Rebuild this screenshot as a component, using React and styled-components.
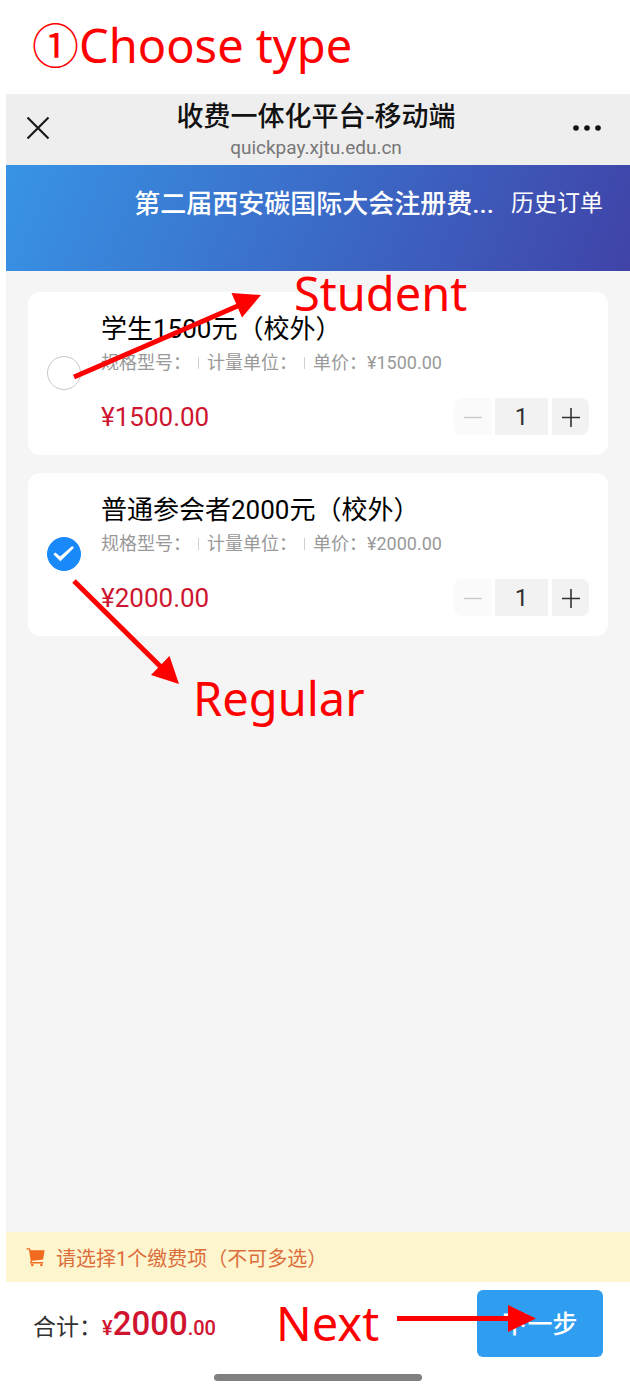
import React, { useState } from 'react';
import styled, { createGlobalStyle, css } from 'styled-components';


// styles
const GlobalStyle = createGlobalStyle`
  * {
    box-sizing: border-box;
  }

  body {
    margin: 0;
    background: #fff;
    color: #111;
    font-family: Roboto, 'Noto Sans CJK SC', sans-serif;
  }

  button,
  input {
    margin: 0;
    padding: 0;
    border: 0;
    font: inherit;
    color: inherit;
  }
`;

const Page = styled.div`
  display: flex;
  flex-direction: column;
  min-height: 100vh;
`;

const guideText = css`
  color: #f00;
  font-family: 'Noto Sans', 'Noto Sans CJK SC', sans-serif;
  font-size: 47px;
  font-weight: 400;
  line-height: 60px;
  white-space: nowrap;
`;

const StepHeading = styled.h1`
  ${guideText}
  height: 94px;
  margin: 0;
  padding: 15px 32px 0;
`;

const Phone = styled.div`
  position: relative;
  flex: 1;
  display: flex;
  flex-direction: column;
  margin-left: 6px;
  background: #f5f5f5;
`;

const NavBar = styled.header`
  display: grid;
  grid-template-columns: 1fr auto 1fr;
  align-items: center;
  height: 71px;
  padding: 0 24px 3px 20px;
  background: #eee;
`;

const NavButton = styled.button`
  display: flex;
  justify-self: ${props => props.$align};
  background: none;
`;

const NavTitles = styled.div`
  display: flex;
  flex-direction: column;
  align-items: center;
`;

const NavTitle = styled.div`
  font-size: 27px;
  font-weight: 500;
  line-height: 39px;
`;

const NavHost = styled.div`
  color: #777;
  font-size: 19px;
  line-height: 22px;
`;

const Banner = styled.div`
  display: flex;
  justify-content: flex-end;
  gap: 17px;
  height: 106px;
  padding: 19px 27px 0;
  background: linear-gradient(112deg, #3894e6 0%, #3b6dc9 48%, #4043a8 100%);
  color: #fff;
  line-height: 40px;
`;

const BannerTitle = styled.div`
  font-size: 26px;
  font-weight: 500;
`;

const BannerLink = styled.a`
  color: inherit;
  font-size: 23px;
  text-decoration: none;
`;

const FeeList = styled.main`
  flex: 1;
  display: flex;
  flex-direction: column;
  gap: 18px;
  padding: 21px 22px;
`;

const FeeCard = styled.section`
  display: flex;
  align-items: center;
  gap: 20px;
  padding: 19px 19px 20px;
  border-radius: 12px;
  background: #fff;
`;

const Choice = styled.span`
  display: grid;
  flex: none;

  > * {
    grid-area: 1 / 1;
  }

  svg {
    pointer-events: none;
  }
`;

const Radio = styled.input`
  appearance: none;
  width: 34px;
  height: 34px;
  border: 1px solid #c8c8c8;
  border-radius: 50%;
  background: #fff;

  &:checked {
    border-color: #1989fa;
    background: #1989fa;
  }
`;

const FeeBody = styled.div`
  flex: 1;
`;

const FeeName = styled.label`
  display: block;
  color: #000;
  font-size: 26px;
  line-height: 36px;
`;

const FeeSpecs = styled.div`
  display: flex;
  align-items: center;
  color: #999;
  font-size: 18px;
  line-height: 32px;
`;

const SpecDivider = styled.span`
  width: 1px;
  height: 12px;
  margin: 0 8px 0 7px;
  background: #d0d0d0;
`;

const FeeBottom = styled.div`
  display: flex;
  align-items: center;
  justify-content: space-between;
  margin-top: 19px;
`;

const Price = styled.div`
  color: #ce1630;
  font-size: 26px;
`;

const StepperBox = styled.div`
  display: flex;
  gap: 4px;
  height: 37px;
`;

const StepperButton = styled.button`
  display: flex;
  align-items: center;
  justify-content: center;
  width: 37px;
  border-radius: ${props => (props.$side === 'left' ? '8px 0 0 8px' : '0 8px 8px 0')};
  background: #f2f2f3;
  color: #323233;

  &:disabled {
    background: #fafafa;
    color: #c8c9cc;
  }
`;

const StepperInput = styled.input`
  width: 53px;
  background: #f2f2f3;
  color: #323233;
  font-size: 24px;
  text-align: center;
`;

const Notice = styled.div`
  display: flex;
  align-items: center;
  gap: 10px;
  height: 50px;
  padding: 0 20px;
  background: #fdf5ce;
  color: #dc6e3c;
  font-size: 20px;
`;

const Footer = styled.footer`
  position: relative;
  display: flex;
  flex-direction: column;
  gap: 17px;
  padding: 8px 27px 12px;
  background: #fff;
`;

const FooterRow = styled.div`
  display: flex;
  align-items: center;
  justify-content: space-between;
`;

const Total = styled.div`
  display: flex;
  align-items: baseline;
  color: #323233;
  font-size: 23px;
`;

const TotalAmount = styled.strong`
  color: #d01430;
  font-size: 20px;
  font-weight: 500;
`;

const TotalWhole = styled.span`
  font-size: 33px;
`;

const NextButton = styled.button`
  width: 126px;
  height: 67px;
  padding-bottom: 4px;
  border-radius: 6px;
  background: #2f9ef0;
  color: #fff;
  font-size: 25px;
  font-weight: 500;
`;

const HomeIndicator = styled.div`
  align-self: center;
  width: 208px;
  height: 7px;
  border-radius: 4px;
  background: #808080;
`;

// guide labels and arrows lie over the phone screen
const GuideLabel = styled.div`
  ${guideText}
  position: absolute;
  left: ${props => props.$left}px;
  top: ${props => props.$top}px;
  pointer-events: none;
`;

const GuideArrow = styled.svg`
  position: absolute;
  left: ${props => props.$left}px;
  top: ${props => props.$top}px;
  fill: #f00;
  stroke: #f00;
  pointer-events: none;

  line {
    stroke-width: 5;
  }

  polygon {
    stroke: none;
  }
`;

// icons
const CloseIcon = () => (
  <svg width="24" height="24" viewBox="0 0 24 24" stroke="#1a1a1a" strokeWidth="2.2">
    <path d="M1.5 1.5l21 21M22.5 1.5l-21 21" />
  </svg>
);

const MoreIcon = () => (
  <svg width="34" height="8" viewBox="0 0 34 8" fill="#111">
    <circle cx="4" cy="4" r="2.8" />
    <circle cx="15" cy="4" r="2.8" />
    <circle cx="26" cy="4" r="2.8" />
  </svg>
);

const CheckIcon = () => (
  <svg width="34" height="34" viewBox="0 0 34 34" fill="#fff">
    <path d="M6.3 17.2l2-1.8 4.9 4L25.2 9l1.8 1.7L13.4 24.3z" />
  </svg>
);

const CartIcon = () => (
  <svg width="20" height="20" viewBox="0 0 20 20" fill="#f26a1e">
    <path d="M.5 1.2h3.3l.8 2H18.6l-1.5 9.3-11 1.3-.3 1.3h11.3v1.4H4.1l.6-3L2.9 2.6H.5z" />
    <circle cx="6.3" cy="18" r="1.3" />
    <circle cx="15.4" cy="18" r="1.3" />
  </svg>
);

const MinusIcon = () => (
  <svg width="20" height="20" viewBox="0 0 20 20" stroke="currentColor" strokeWidth="1.4">
    <path d="M1 10.5h18" />
  </svg>
);

const PlusIcon = () => (
  <svg width="20" height="20" viewBox="0 0 20 20" stroke="currentColor" strokeWidth="1.6">
    <path d="M1 10.5h18M10 1v19" />
  </svg>
);

// components
const Stepper = ({ name }) => {
  const [count, setCount] = useState(1);

  return (
    <StepperBox>
      <StepperButton
        $side="left"
        type="button"
        aria-label={`${name} −`}
        disabled={count <= 1}
        onClick={() => setCount(count - 1)}
      >
        <MinusIcon />
      </StepperButton>
      <StepperInput type="text" inputMode="numeric" aria-label={name} value={count} readOnly />
      <StepperButton
        $side="right"
        type="button"
        aria-label={`${name} +`}
        onClick={() => setCount(count + 1)}
      >
        <PlusIcon />
      </StepperButton>
    </StepperBox>
  );
};

const FeeItem = ({ id, name, price, checked, onSelect }) => (
  <FeeCard>
    <Choice>
      <Radio type="radio" name="fee" id={id} checked={checked} onChange={() => onSelect(id)} />
      {checked && <CheckIcon />}
    </Choice>
    <FeeBody>
      <FeeName htmlFor={id}>{name}</FeeName>
      <FeeSpecs>
        <span>规格型号：</span>
        <SpecDivider />
        <span>计量单位：</span>
        <SpecDivider />
        <span>单价：¥{price}.00</span>
      </FeeSpecs>
      <FeeBottom>
        <Price>¥{price}.00</Price>
        <Stepper name={name} />
      </FeeBottom>
    </FeeBody>
  </FeeCard>
);

const fees = [
  { id: 'student', name: '学生1500元（校外）', price: 1500 },
  { id: 'regular', name: '普通参会者2000元（校外）', price: 2000 },
];

const App = () => {
  const [selected, setSelected] = useState('regular');
  const total = fees.find(fee => fee.id === selected).price;

  return (
    <Page>
      <GlobalStyle />
      <StepHeading>①Choose type</StepHeading>
      <Phone>
        <NavBar>
          <NavButton $align="start" type="button" aria-label="Close"><CloseIcon /></NavButton>
          <NavTitles>
            <NavTitle>收费一体化平台-移动端</NavTitle>
            <NavHost>quickpay.xjtu.edu.cn</NavHost>
          </NavTitles>
          <NavButton $align="end" type="button" aria-label="More"><MoreIcon /></NavButton>
        </NavBar>
        <Banner>
          <BannerTitle>第二届西安碳国际大会注册费...</BannerTitle>
          <BannerLink href="#orders">历史订单</BannerLink>
        </Banner>
        <FeeList>
          {fees.map(fee => (
            <FeeItem
              key={fee.id}
              {...fee}
              checked={fee.id === selected}
              onSelect={setSelected}
            />
          ))}
        </FeeList>
        <Notice>
          <CartIcon />
          <span>请选择1个缴费项（不可多选）</span>
        </Notice>
        <Footer>
          <FooterRow>
            <Total>
              合计：
              <TotalAmount>¥<TotalWhole>{total}</TotalWhole>.00</TotalAmount>
            </Total>
            <NextButton type="button">下一步</NextButton>
          </FooterRow>
          <HomeIndicator />
          <GuideLabel $left={270} $top={11}>Next</GuideLabel>
          <GuideArrow $left={391} $top={20} width="140" height="34">
            <line x1="0" y1="16.5" x2="114" y2="16.5" />
            <polygon points="111,3 139,16.5 111,30" />
          </GuideArrow>
        </Footer>
        <GuideLabel $left={288} $top={169}>Student</GuideLabel>
        <GuideArrow $left={64} $top={194} width="200" height="95">
          <line x1="4" y1="89" x2="170" y2="17" />
          <polygon points="161.5,5 191,7 172,29.5" />
        </GuideArrow>
        <GuideLabel $left={187} $top={574}>Regular</GuideLabel>
        <GuideArrow $left={64} $top={482} width="115" height="115">
          <line x1="4" y1="5" x2="94" y2="94" />
          <polygon points="99.5,80 109,108 81,99" />
        </GuideArrow>
      </Phone>
    </Page>
  );
};

export default App;
